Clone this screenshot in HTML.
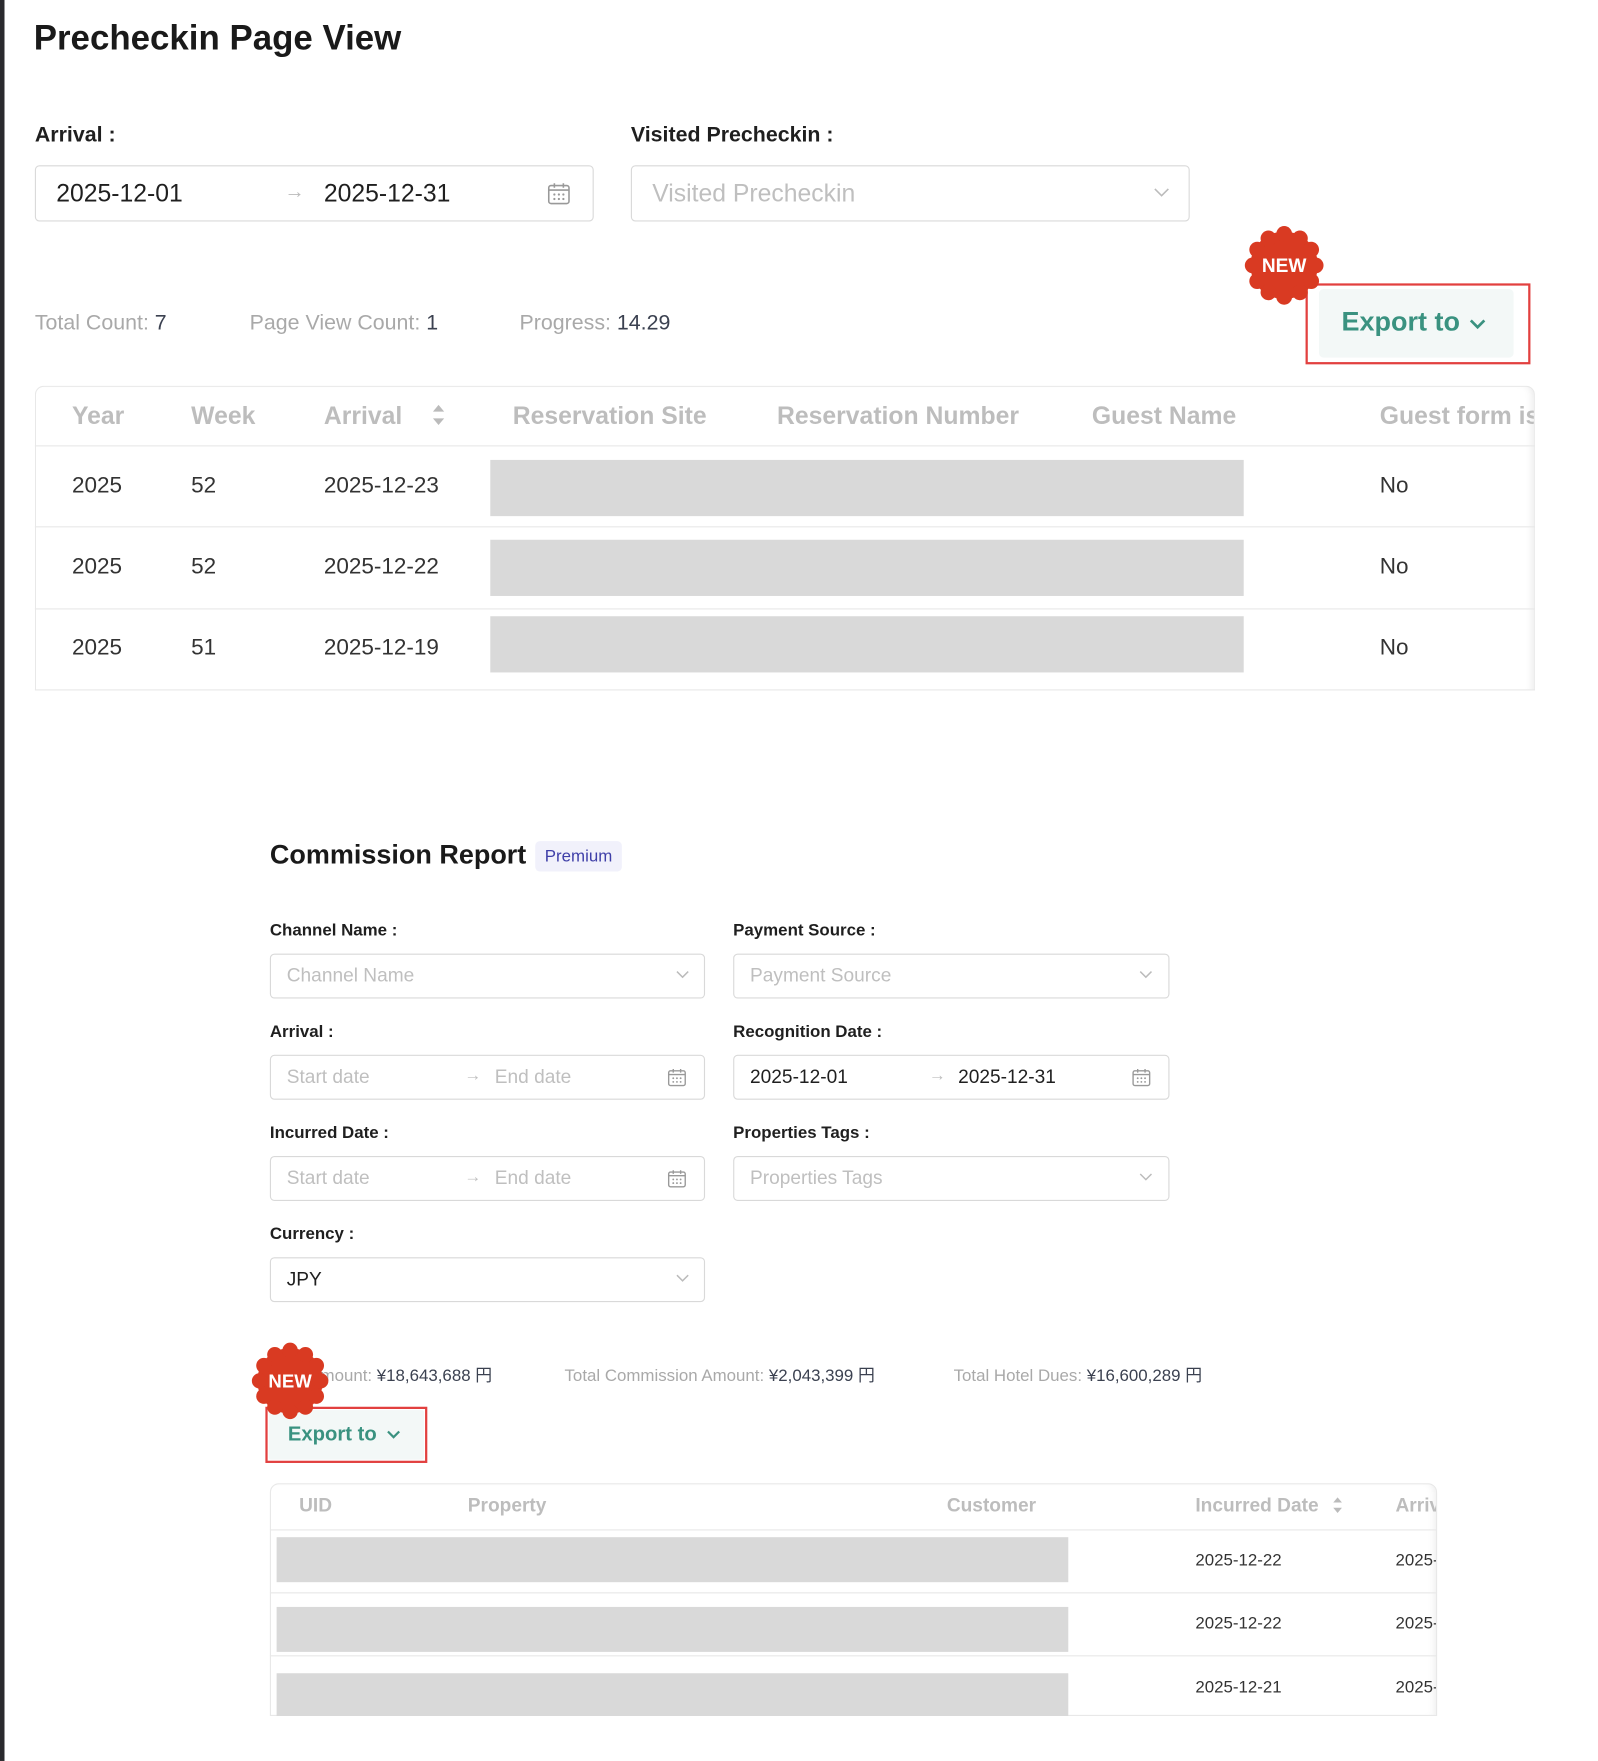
<!DOCTYPE html>
<html><head><meta charset="utf-8"><style>
*{box-sizing:border-box;margin:0;padding:0}
html,body{width:1598px;height:1760px;overflow:hidden;background:#fff}
#w{position:absolute;left:0;top:0;width:1421px;height:1566px;transform:scale(1.1245);transform-origin:0 0;font-family:"Liberation Sans","Noto Sans CJK JP",sans-serif;color:#1f1f1f}
.a{position:absolute;white-space:nowrap}
.bar{left:0;top:0;width:3.5px;height:1566px;background:#2a2a2e}
.lab{font-weight:bold}
.box{position:absolute;border:1px solid #d9d9d9;border-radius:4px;background:#fff}
.ph{color:#bfbfbf}
.g{color:#a9a9a9}.v{color:#3b4150}
.hd{font-weight:bold;color:#bdbdbd}
.blk{position:absolute;background:#d9d9d9}
.line{position:absolute;height:1px;background:#e8e8e8}
.red{position:absolute;border:2px solid #e2403f}
.btn{position:absolute;background:#f3f8f7;border-radius:4px;color:#3a9280;font-weight:bold}
</style></head><body><div id="w">
<div class="a bar"></div>
<div class="a" style="left:30px;top:16px;font-size:31px;font-weight:bold;color:#1a1a1a">Precheckin Page View</div>

<div class="a lab" style="left:31px;top:110px;font-size:19px">Arrival :</div>
<div class="a lab" style="left:561px;top:110px;font-size:19px">Visited Precheckin :</div>
<div class="box" style="left:31px;top:147px;width:497px;height:50px"></div>
<div class="a" style="left:50px;top:159px;font-size:22px">2025-12-01</div>
<div class="a" style="left:253px;top:160px;font-size:18px;color:#bbb">→</div>
<div class="a" style="left:288px;top:159px;font-size:22px">2025-12-31</div>
<svg class="a" style="left:486px;top:161px" width="22" height="22" viewBox="0 0 22 22" fill="none" stroke="#999" stroke-width="1.4"><rect x="2" y="4" width="18" height="16" rx="2"/><path d="M2 8h18M7 2v4M15 2v4"/><g fill="#999" stroke="none"><circle cx="7" cy="12" r="1"/><circle cx="11" cy="12" r="1"/><circle cx="15" cy="12" r="1"/><circle cx="7" cy="16" r="1"/><circle cx="11" cy="16" r="1"/><circle cx="15" cy="16" r="1"/></g></svg>
<div class="box" style="left:561px;top:147px;width:497px;height:50px"></div>
<div class="a ph" style="left:580px;top:159px;font-size:22px">Visited Precheckin</div>
<svg class="a" style="left:1025px;top:165px" width="16" height="12" viewBox="0 0 16 12" fill="none" stroke="#bbb" stroke-width="1.4"><path d="M2 3l6 6 6-6"/></svg>

<div class="a" style="left:31px;top:277px;font-size:19px"><span class="g">Total Count: </span><span class="v">7</span></div>
<div class="a" style="left:222px;top:277px;font-size:19px"><span class="g">Page View Count: </span><span class="v">1</span></div>
<div class="a" style="left:462px;top:277px;font-size:19px"><span class="g">Progress: </span><span class="v">14.29</span></div>

<div class="red" style="left:1161px;top:252px;width:200px;height:72px"></div>
<div class="btn" style="left:1173px;top:257px;width:173px;height:61px"></div>
<div class="a" style="left:1193px;top:273px;font-size:24px;font-weight:bold;color:#3a9280">Export to</div>
<svg class="a" style="left:1305px;top:281px" width="18" height="14" viewBox="0 0 18 14" fill="none" stroke="#3a9280" stroke-width="2.4"><path d="M3 4l6 6 6-6"/></svg>
<svg class="a" style="left:1106px;top:200px" width="72" height="72" viewBox="0 0 72 72"><g fill="#d93a22"><circle cx="36" cy="36" r="30"/><circle cx="36" cy="8" r="7"/><circle cx="50" cy="12" r="7"/><circle cx="60" cy="22" r="7"/><circle cx="64" cy="36" r="7"/><circle cx="60" cy="50" r="7"/><circle cx="50" cy="60" r="7"/><circle cx="36" cy="64" r="7"/><circle cx="22" cy="60" r="7"/><circle cx="12" cy="50" r="7"/><circle cx="8" cy="36" r="7"/><circle cx="12" cy="22" r="7"/><circle cx="22" cy="12" r="7"/></g><text x="36" y="42" text-anchor="middle" font-family="Liberation Sans" font-weight="bold" font-size="17" fill="#fff">NEW</text></svg>

<div class="a" style="left:31px;top:343px;width:1334px;height:271px;border:1px solid #e8e8e8;border-bottom:none;border-radius:8px 8px 0 0;overflow:hidden;box-shadow:inset -6px 0 8px -6px rgba(0,0,0,.12)"></div>
<div class="line" style="left:31px;top:396px;width:1334px"></div>
<div class="line" style="left:31px;top:468px;width:1334px"></div>
<div class="line" style="left:31px;top:541px;width:1334px"></div>
<div class="line" style="left:31px;top:613px;width:1334px"></div>
<div class="a hd" style="left:64px;top:357px;font-size:22px">Year</div>
<div class="a hd" style="left:170px;top:357px;font-size:22px">Week</div>
<div class="a hd" style="left:288px;top:357px;font-size:22px">Arrival</div>
<svg class="a" style="left:383px;top:358px" width="14" height="22" viewBox="0 0 14 22" fill="#bbb"><path d="M7 2l5 6H2zM7 20l5-6H2z"/></svg>
<div class="a hd" style="left:456px;top:357px;font-size:22px">Reservation Site</div>
<div class="a hd" style="left:691px;top:357px;font-size:22px">Reservation Number</div>
<div class="a hd" style="left:971px;top:357px;font-size:22px">Guest Name</div>
<div class="a" style="left:1227px;top:357px;width:137px;overflow:hidden;font-size:22px;font-weight:bold;color:#bdbdbd">Guest form is</div>
<div class="a" style="left:64px;top:421px;font-size:20px;color:#333">2025</div><div class="a" style="left:170px;top:421px;font-size:20px;color:#333">52</div><div class="a" style="left:288px;top:421px;font-size:20px;color:#333">2025-12-23</div><div class="a" style="left:1227px;top:421px;font-size:20px;color:#333">No</div>
<div class="a" style="left:64px;top:493px;font-size:20px;color:#333">2025</div><div class="a" style="left:170px;top:493px;font-size:20px;color:#333">52</div><div class="a" style="left:288px;top:493px;font-size:20px;color:#333">2025-12-22</div><div class="a" style="left:1227px;top:493px;font-size:20px;color:#333">No</div>
<div class="a" style="left:64px;top:565px;font-size:20px;color:#333">2025</div><div class="a" style="left:170px;top:565px;font-size:20px;color:#333">51</div><div class="a" style="left:288px;top:565px;font-size:20px;color:#333">2025-12-19</div><div class="a" style="left:1227px;top:565px;font-size:20px;color:#333">No</div>
<div class="blk" style="left:436px;top:409px;width:670px;height:50px"></div>
<div class="blk" style="left:436px;top:480px;width:670px;height:50px"></div>
<div class="blk" style="left:436px;top:548px;width:670px;height:50px"></div>

<div class="a" style="left:240px;top:747px;font-size:24px;font-weight:bold;color:#1a1a1a">Commission Report</div>
<div class="a" style="left:476px;top:748px;width:77px;height:27px;background:#f1f1fb;border-radius:4px;color:#3f3fa8;font-size:15px;text-align:center;line-height:27px">Premium</div>

<div class="a lab" style="left:240px;top:819px;font-size:15px">Channel Name :</div>
<div class="a lab" style="left:652px;top:819px;font-size:15px">Payment Source :</div>
<div class="box" style="left:240px;top:848px;width:387px;height:40px"></div><div class="a ph" style="left:255px;top:858px;font-size:17px">Channel Name</div>
<div class="box" style="left:652px;top:848px;width:388px;height:40px"></div><div class="a ph" style="left:667px;top:858px;font-size:17px">Payment Source</div>
<div class="a lab" style="left:240px;top:909px;font-size:15px">Arrival :</div>
<div class="a lab" style="left:652px;top:909px;font-size:15px">Recognition Date :</div>
<div class="box" style="left:240px;top:938px;width:387px;height:40px"></div>
<div class="a ph" style="left:255px;top:948px;font-size:17px">Start date</div><div class="a ph" style="left:413px;top:948px;font-size:15px">→</div><div class="a ph" style="left:440px;top:948px;font-size:17px">End date</div>
<div class="box" style="left:652px;top:938px;width:388px;height:40px"></div>
<div class="a" style="left:667px;top:948px;font-size:17px">2025-12-01</div><div class="a ph" style="left:826px;top:948px;font-size:15px">→</div><div class="a" style="left:852px;top:948px;font-size:17px">2025-12-31</div>
<div class="a lab" style="left:240px;top:999px;font-size:15px">Incurred Date :</div>
<div class="a lab" style="left:652px;top:999px;font-size:15px">Properties Tags :</div>
<div class="box" style="left:240px;top:1028px;width:387px;height:40px"></div>
<div class="a ph" style="left:255px;top:1038px;font-size:17px">Start date</div><div class="a ph" style="left:413px;top:1038px;font-size:15px">→</div><div class="a ph" style="left:440px;top:1038px;font-size:17px">End date</div>
<div class="box" style="left:652px;top:1028px;width:388px;height:40px"></div><div class="a ph" style="left:667px;top:1038px;font-size:17px">Properties Tags</div>
<div class="a lab" style="left:240px;top:1089px;font-size:15px">Currency :</div>
<div class="box" style="left:240px;top:1118px;width:387px;height:40px"></div><div class="a" style="left:255px;top:1128px;font-size:17px">JPY</div>
<svg class="a" style="left:600px;top:862px" width="14" height="10" viewBox="0 0 14 10" fill="none" stroke="#bbb" stroke-width="1.3"><path d="M2 2l5 5 5-5"/></svg>
<svg class="a" style="left:1012px;top:862px" width="14" height="10" viewBox="0 0 14 10" fill="none" stroke="#bbb" stroke-width="1.3"><path d="M2 2l5 5 5-5"/></svg>
<svg class="a" style="left:1012px;top:1042px" width="14" height="10" viewBox="0 0 14 10" fill="none" stroke="#bbb" stroke-width="1.3"><path d="M2 2l5 5 5-5"/></svg>
<svg class="a" style="left:600px;top:1132px" width="14" height="10" viewBox="0 0 14 10" fill="none" stroke="#bbb" stroke-width="1.3"><path d="M2 2l5 5 5-5"/></svg>
<svg class="a" style="left:593px;top:949px" width="18" height="18" viewBox="0 0 22 22" fill="none" stroke="#999" stroke-width="1.5"><rect x="2" y="4" width="18" height="16" rx="2"/><path d="M2 8h18M7 2v4M15 2v4"/><g fill="#999" stroke="none"><circle cx="7" cy="12" r="1"/><circle cx="11" cy="12" r="1"/><circle cx="15" cy="12" r="1"/><circle cx="7" cy="16" r="1"/><circle cx="11" cy="16" r="1"/><circle cx="15" cy="16" r="1"/></g></svg>
<svg class="a" style="left:1006px;top:949px" width="18" height="18" viewBox="0 0 22 22" fill="none" stroke="#999" stroke-width="1.5"><rect x="2" y="4" width="18" height="16" rx="2"/><path d="M2 8h18M7 2v4M15 2v4"/><g fill="#999" stroke="none"><circle cx="7" cy="12" r="1"/><circle cx="11" cy="12" r="1"/><circle cx="15" cy="12" r="1"/><circle cx="7" cy="16" r="1"/><circle cx="11" cy="16" r="1"/><circle cx="15" cy="16" r="1"/></g></svg>
<svg class="a" style="left:593px;top:1039px" width="18" height="18" viewBox="0 0 22 22" fill="none" stroke="#999" stroke-width="1.5"><rect x="2" y="4" width="18" height="16" rx="2"/><path d="M2 8h18M7 2v4M15 2v4"/><g fill="#999" stroke="none"><circle cx="7" cy="12" r="1"/><circle cx="11" cy="12" r="1"/><circle cx="15" cy="12" r="1"/><circle cx="7" cy="16" r="1"/><circle cx="11" cy="16" r="1"/><circle cx="15" cy="16" r="1"/></g></svg>

<div class="a" style="left:240px;top:1212px;font-size:15px"><span class="g">Total Amount: </span><span class="v">¥18,643,688 円</span></div>
<div class="a" style="left:502px;top:1212px;font-size:15px"><span class="g">Total Commission Amount: </span><span class="v">¥2,043,399 円</span></div>
<div class="a" style="left:848px;top:1212px;font-size:15px"><span class="g">Total Hotel Dues: </span><span class="v">¥16,600,289 円</span></div>

<div class="red" style="left:236px;top:1251px;width:144px;height:50px"></div>
<div class="btn" style="left:239px;top:1254px;width:138px;height:44px;border-radius:2px"></div>
<div class="a" style="left:256px;top:1265px;font-size:18px;font-weight:bold;color:#3a9280">Export to</div>
<svg class="a" style="left:343px;top:1271px" width="14" height="10" viewBox="0 0 14 10" fill="none" stroke="#3a9280" stroke-width="2"><path d="M2 2l5 5 5-5"/></svg>
<svg class="a" style="left:223px;top:1193px" width="70" height="70" viewBox="0 0 72 72"><g fill="#d93a22"><circle cx="36" cy="36" r="30"/><circle cx="36" cy="8" r="7"/><circle cx="50" cy="12" r="7"/><circle cx="60" cy="22" r="7"/><circle cx="64" cy="36" r="7"/><circle cx="60" cy="50" r="7"/><circle cx="50" cy="60" r="7"/><circle cx="36" cy="64" r="7"/><circle cx="22" cy="60" r="7"/><circle cx="12" cy="50" r="7"/><circle cx="8" cy="36" r="7"/><circle cx="12" cy="22" r="7"/><circle cx="22" cy="12" r="7"/></g><text x="36" y="42" text-anchor="middle" font-family="Liberation Sans" font-weight="bold" font-size="17" fill="#fff">NEW</text></svg>

<div class="a" style="left:240px;top:1319px;width:1038px;height:207px;border:1px solid #e8e8e8;border-radius:8px 8px 0 0;box-shadow:inset -6px 0 8px -6px rgba(0,0,0,.1)"></div>
<div class="line" style="left:240px;top:1360px;width:1038px"></div>
<div class="line" style="left:240px;top:1416px;width:1038px"></div>
<div class="line" style="left:240px;top:1472px;width:1038px"></div>
<div class="a hd" style="left:266px;top:1329px;font-size:17px">UID</div>
<div class="a hd" style="left:416px;top:1329px;font-size:17px">Property</div>
<div class="a hd" style="left:842px;top:1329px;font-size:17px">Customer</div>
<div class="a hd" style="left:1063px;top:1329px;font-size:17px">Incurred Date</div>
<svg class="a" style="left:1184px;top:1330px" width="11" height="17" viewBox="0 0 14 22" fill="#bbb"><path d="M7 2l5 6H2zM7 20l5-6H2z"/></svg>
<div class="a" style="left:1241px;top:1329px;width:36px;overflow:hidden;font-size:17px;font-weight:bold;color:#bdbdbd">Arrival</div>
<div class="a" style="left:1063px;top:1379px;font-size:15px;color:#333">2025-12-22</div><div class="a" style="left:1241px;top:1379px;width:36px;overflow:hidden;font-size:15px;color:#333">2025-12</div>
<div class="a" style="left:1063px;top:1435px;font-size:15px;color:#333">2025-12-22</div><div class="a" style="left:1241px;top:1435px;width:36px;overflow:hidden;font-size:15px;color:#333">2025-12</div>
<div class="a" style="left:1063px;top:1492px;font-size:15px;color:#333">2025-12-21</div><div class="a" style="left:1241px;top:1492px;width:36px;overflow:hidden;font-size:15px;color:#333">2025-12</div>
<div class="blk" style="left:246px;top:1367px;width:704px;height:40px"></div>
<div class="blk" style="left:246px;top:1429px;width:704px;height:40px"></div>
<div class="blk" style="left:246px;top:1488px;width:704px;height:38px"></div>
</div></body></html>
